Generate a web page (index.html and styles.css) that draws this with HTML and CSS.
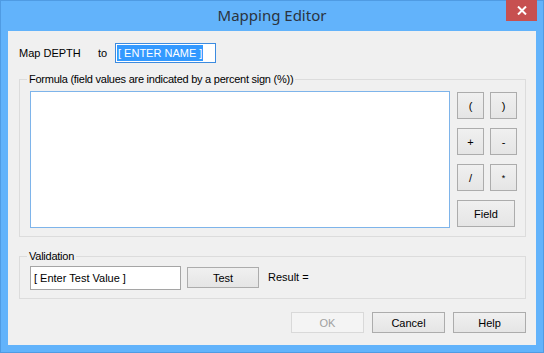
FILE: index.html
```html
<!DOCTYPE html>
<html lang="en">
<head>
    <meta charset="UTF-8">
    <title>Mapping Editor</title>
    <link rel="stylesheet" href="styles.css">
</head>
<body>
    <div class="window">
        <div class="titlebar">
            Mapping Editor
            <div class="close-button">
                <svg width="10" height="9" viewBox="0 0 10 9">
                    <path d="M1 0.5 L9 8.5 M9 0.5 L1 8.5" stroke="#fff" stroke-width="2"/>
                </svg>
            </div>
        </div>

        <div class="client">
            <div class="map-row">
                <span class="map-label">Map DEPTH</span>
                <span class="to-label">to</span>
                <div class="name-input"><span class="selected">[ ENTER NAME ]</span></div>
            </div>

            <div class="group formula-group">
                <span class="group-label">Formula (field values are indicated by a percent sign (%))</span>
                <div class="formula-box"></div>
                <div class="op-buttons">
                    <div class="op-grid">
                        <button class="btn op">(</button>
                        <button class="btn op">)</button>
                        <button class="btn op">+</button>
                        <button class="btn op">-</button>
                        <button class="btn op">/</button>
                        <button class="btn op small">*</button>
                    </div>
                    <button class="btn field">Field</button>
                </div>
            </div>

            <div class="group validation-group">
                <span class="group-label">Validation</span>
                <div class="test-input">[ Enter Test Value ]</div>
                <button class="btn test">Test</button>
                <span class="result">Result =</span>
            </div>

            <div class="footer">
                <button class="btn action" disabled>OK</button>
                <button class="btn action">Cancel</button>
                <button class="btn action">Help</button>
            </div>
        </div>
    </div>
</body>
</html>
```

FILE: styles.css
```css
* {
    margin: 0;
    padding: 0;
    box-sizing: border-box;
}

body {
    font-family: "Liberation Sans", Arial, sans-serif;
    font-size: 11px;
    color: #000;
    background: #62b3fb;
}

.window {
    width: 544px;
    height: 353px;
    background: #62b3fb;
    border: 1px solid #4f9be3;
}

/* Title bar */
.titlebar {
    position: relative;
    height: 30px;
    line-height: 29px;
    text-align: center;
    font-family: "Noto Sans", "Open Sans", sans-serif;
    font-size: 15px;
    color: #2b3440;
}

.close-button {
    position: absolute;
    top: -1px;
    right: 6px;
    width: 31px;
    height: 21px;
    background: #c75050;
    display: flex;
    align-items: center;
    justify-content: center;
}

.close-button svg {
    display: block;
}

/* Client area */
.client {
    margin: 0 7px;
    height: 314px;
    background: #f0f0f0;
    padding: 12px 10px 0 11px;
}

.map-row {
    display: flex;
    align-items: center;
    height: 20px;
}

.map-label {
    width: 79px;
}

.to-label {
    width: 17px;
}

.name-input {
    width: 101px;
    height: 20px;
    border: 1px solid #3c8be0;
    background: #fff;
    padding: 1px 0 0 1px;
}

.selected {
    display: inline-block;
    background: #3399ff;
    color: #fff;
    line-height: 16px;
    padding: 0 1px;
}

/* Group boxes */
.group {
    position: relative;
    width: 507px;
    border: 1px solid #dcdcdc;
    display: flex;
}

.group-label {
    position: absolute;
    top: -8px;
    left: 7px;
    padding: 0 2px;
    background: #f0f0f0;
    line-height: 14px;
    letter-spacing: -0.25px;
}

.formula-group {
    margin-top: 16px;
    height: 158px;
    padding: 11px 0 0 10px;
}

.formula-box {
    width: 420px;
    height: 137px;
    border: 1px solid #7eb4ea;
    background: #fff;
}

.op-buttons {
    margin: 1px 0 0 7px;
}

.op-grid {
    display: grid;
    grid-template-columns: 27px 27px;
    column-gap: 6px;
    row-gap: 9px;
    margin-bottom: 9px;
}

/* Buttons */
.btn {
    font-family: "Liberation Sans", Arial, sans-serif;
    font-size: 11px;
    color: #000;
    border: 1px solid #acacac;
    background: linear-gradient(#f0f0f0, #e5e5e5);
}

.btn:disabled {
    color: #a0a0a0;
    border-color: #d9d9d9;
    background: #f4f4f4;
}

.op {
    height: 27px;
}

.op.small {
    font-size: 9px;
}

.field {
    width: 58px;
    height: 27px;
}

.validation-group {
    margin-top: 19px;
    height: 43px;
    padding: 9px 0 0 10px;
    align-items: flex-start;
}

.test-input {
    width: 151px;
    height: 24px;
    border: 1px solid #a5a5a5;
    background: #fff;
    padding: 5px 0 0 3px;
}

.test {
    width: 72px;
    height: 21px;
    margin: 1px 0 0 6px;
}

.result {
    margin: 5px 0 0 9px;
}

.footer {
    display: flex;
    justify-content: flex-end;
    gap: 8px;
    margin-top: 13px;
    width: 507px;
}

.action {
    width: 73px;
    height: 21px;
}
```
